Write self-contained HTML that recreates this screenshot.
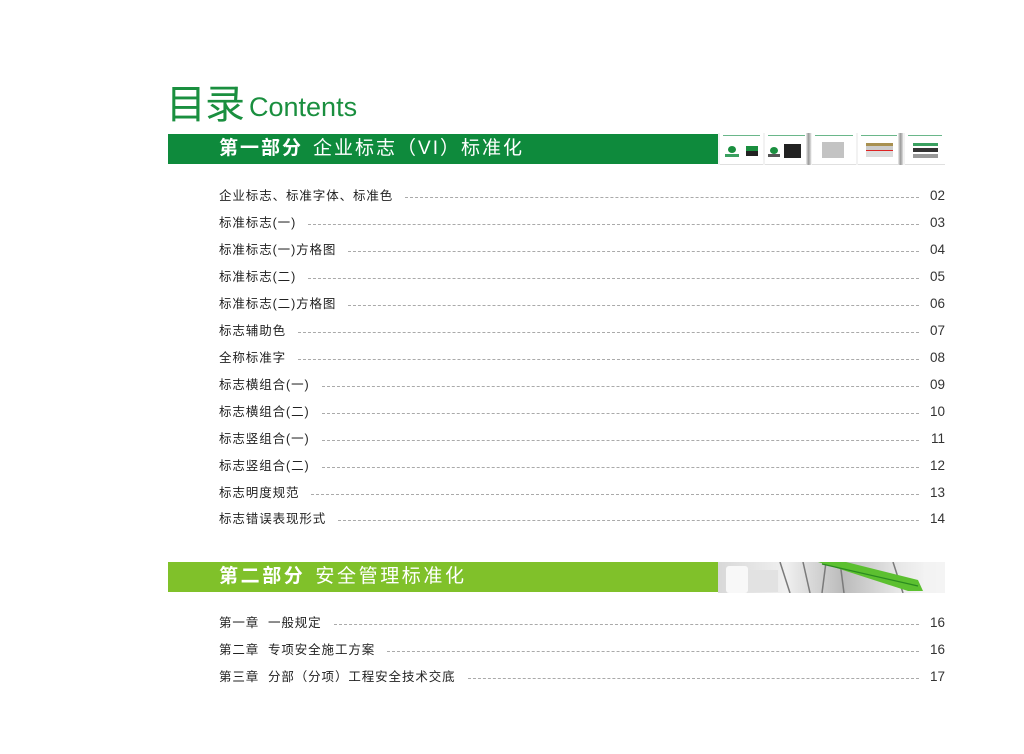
<!DOCTYPE html>
<html><head><meta charset="utf-8"><style>
*{margin:0;padding:0;box-sizing:border-box}
body{width:1024px;height:754px;background:#fff;position:relative;overflow:hidden;font-family:"Liberation Sans","Noto Sans CJK SC",sans-serif;color:#222}
.title{position:absolute;left:166px;top:84px;color:#1a8f3f;white-space:nowrap}
.title .cn{font-size:40px;letter-spacing:-1px;vertical-align:bottom;line-height:42px}
.title .en{font-size:27px;vertical-align:bottom;line-height:38px;margin-left:5px}
.bar{position:absolute;left:168px;width:550px;height:30px;color:#fff;font-size:19px;letter-spacing:2px;line-height:30px;padding-left:51px;white-space:nowrap}
.bar b{font-weight:bold;margin-right:10px}
.b1{top:134px;background:#0e8a3c}
.b2{top:562px;background:#80c12a;letter-spacing:2.6px}
.row{position:absolute;left:219px;width:726px;height:16px;font-size:12.5px;letter-spacing:0.9px;line-height:16px;display:flex;align-items:center}
.row .t{white-space:nowrap;padding-right:12px}
.row .d{flex:1;border-bottom:1px dashed #aaa;height:0;margin-top:2px}
.row .n{width:26px;text-align:right;font-size:13.5px;letter-spacing:0;color:#333}
.thumbs{position:absolute;left:718px;top:133px;width:227px;height:32px;background:#f2f2f2}
.pg{position:absolute;top:0;height:32px;background:#fff;border-bottom:1px solid #e0e0e0}
.pg i{position:absolute;left:3px;right:3px;top:2px;height:1px;background:#6ab78a}
.fold{position:absolute;top:0;width:5px;height:32px;background:linear-gradient(90deg,#eee,#999,#ddd)}
.img2{position:absolute;left:718px;top:562px;width:227px;height:31px;background:linear-gradient(90deg,#d8d8d8,#f0f0f0 30%,#bbb 55%,#e8e8e8 80%,#fafafa);overflow:hidden}
</style></head><body>
<div class="title"><span class="cn">目录</span><span class="en">Contents</span></div>
<div class="bar b1"><b>第一部分</b>企业标志（VI）标准化</div>
<div class="thumbs">
 <div class="pg" style="left:2px;width:43px"><i></i><div style="position:absolute;left:8px;top:13px;width:8px;height:7px;background:#1a8f3f;border-radius:50%"></div><div style="position:absolute;left:5px;top:21px;width:14px;height:3px;background:#3aa060"></div><div style="position:absolute;left:26px;top:13px;width:12px;height:5px;background:#1a8f3f"></div><div style="position:absolute;left:26px;top:18px;width:12px;height:5px;background:#222"></div></div>
 <div class="pg" style="left:47px;width:43px"><i></i><div style="position:absolute;left:5px;top:14px;width:8px;height:7px;background:#1a8f3f;border-radius:50%"></div><div style="position:absolute;left:3px;top:21px;width:12px;height:3px;background:#555"></div><div style="position:absolute;left:19px;top:11px;width:17px;height:14px;background:#222"></div></div>
 <div class="fold" style="left:88px"></div>
 <div class="pg" style="left:94px;width:44px"><i></i><div style="position:absolute;left:10px;top:9px;width:22px;height:16px;background:#aaa;opacity:.7"></div></div>
 <div class="pg" style="left:140px;width:42px"><i></i><div style="position:absolute;left:8px;top:10px;width:27px;height:3px;background:#a89050"></div><div style="position:absolute;left:8px;top:13px;width:27px;height:4px;background:#ccc"></div><div style="position:absolute;left:8px;top:17px;width:27px;height:1px;background:#d22"></div><div style="position:absolute;left:8px;top:18px;width:27px;height:6px;background:#ddd"></div></div>
 <div class="fold" style="left:180px"></div>
 <div class="pg" style="left:187px;width:40px"><i></i><div style="position:absolute;left:8px;top:10px;width:25px;height:3px;background:#3aa060"></div><div style="position:absolute;left:8px;top:15px;width:25px;height:4px;background:#333"></div><div style="position:absolute;left:8px;top:21px;width:25px;height:4px;background:#999"></div></div>
</div>
<div class="bar b2"><b>第二部分</b>安全管理标准化</div>
<div class="img2"><svg width="227" height="31"><rect x="8" y="4" width="22" height="27" fill="#f8f8f8" rx="3"/><rect x="30" y="8" width="30" height="22" fill="#e2e2e2"/><g stroke="#7a7a7a" stroke-width="1.5"><line x1="62" y1="0" x2="72" y2="31"/><line x1="85" y1="0" x2="92" y2="31"/><line x1="108" y1="0" x2="104" y2="31"/><line x1="122" y1="0" x2="126" y2="31"/><line x1="175" y1="0" x2="185" y2="31"/></g><polygon points="100,0 128,0 200,18 205,29 190,29" fill="#5cc030"/><line x1="104" y1="2" x2="200" y2="24" stroke="#2a8a20" stroke-width="1.2"/><rect x="205" y="0" width="22" height="31" fill="#f2f2f2" opacity=".8"/></svg></div>

<div class="row" style="top:188px"><span class="t">企业标志、标准字体、标准色</span><span class="d"></span><span class="n">02</span></div>
<div class="row" style="top:215px"><span class="t">标准标志(一)</span><span class="d"></span><span class="n">03</span></div>
<div class="row" style="top:242px"><span class="t">标准标志(一)方格图</span><span class="d"></span><span class="n">04</span></div>
<div class="row" style="top:269px"><span class="t">标准标志(二)</span><span class="d"></span><span class="n">05</span></div>
<div class="row" style="top:296px"><span class="t">标准标志(二)方格图</span><span class="d"></span><span class="n">06</span></div>
<div class="row" style="top:323px"><span class="t">标志辅助色</span><span class="d"></span><span class="n">07</span></div>
<div class="row" style="top:350px"><span class="t">全称标准字</span><span class="d"></span><span class="n">08</span></div>
<div class="row" style="top:377px"><span class="t">标志横组合(一)</span><span class="d"></span><span class="n">09</span></div>
<div class="row" style="top:404px"><span class="t">标志横组合(二)</span><span class="d"></span><span class="n">10</span></div>
<div class="row" style="top:431px"><span class="t">标志竖组合(一)</span><span class="d"></span><span class="n">11</span></div>
<div class="row" style="top:458px"><span class="t">标志竖组合(二)</span><span class="d"></span><span class="n">12</span></div>
<div class="row" style="top:485px"><span class="t">标志明度规范</span><span class="d"></span><span class="n">13</span></div>
<div class="row" style="top:511px"><span class="t">标志错误表现形式</span><span class="d"></span><span class="n">14</span></div>

<div class="row" style="top:615px"><span class="t">第一章&nbsp;&nbsp;一般规定</span><span class="d"></span><span class="n">16</span></div>
<div class="row" style="top:642px"><span class="t">第二章&nbsp;&nbsp;专项安全施工方案</span><span class="d"></span><span class="n">16</span></div>
<div class="row" style="top:669px"><span class="t">第三章&nbsp;&nbsp;分部（分项）工程安全技术交底</span><span class="d"></span><span class="n">17</span></div>
</body></html>
